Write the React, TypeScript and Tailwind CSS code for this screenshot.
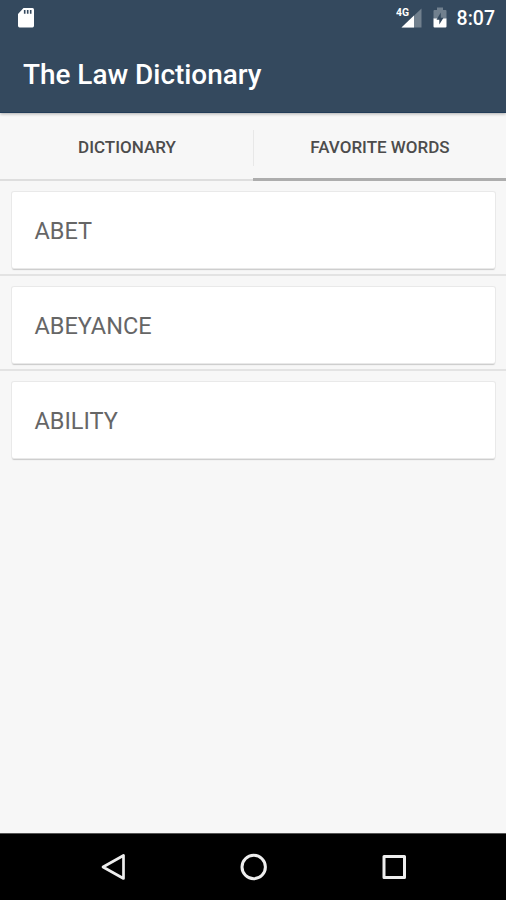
const words = ["ABET", "ABEYANCE", "ABILITY"];

function SdCardIcon() {
    return <svg width="18" height="22" viewBox="0 0 18 22">
        <path d="M6.5 1H15.5Q17 1 17 2.500V18.500Q17 20.500 15.500 20.500H2.500Q1 20.500 1 18.500V7Z" fill="#fff" />
        <path d="M7.700 3V6.800M10.700 3V6.800M13.700 3V6.800" stroke="#34495e" strokeWidth="1.600" />
    </svg>
}

function SignalIcon() {
    return <svg width="28" height="24" viewBox="0 0 28 24">
        <path d="M25.500 2.500V21.500H5.500Z" fill="#71808e" />
        <path d="M18 9.600V21.500H5.500Z" fill="#fff" />
        <text x="0" y="9.500" fontSize="10" fontWeight="700" fill="#fff" textLength="13" lengthAdjust="spacingAndGlyphs">4G</text>
    </svg>
}

function BatteryIcon() {
    return <svg width="14" height="22" viewBox="0 0 14 22">
        <path d="M4 0.500H10V3H12.500Q13.500 3 13.500 4V12H0.500V4Q0.500 3 1.500 3H4Z" fill="#71808e" />
        <path d="M0.500 11.500H13.500V19.500Q13.500 20.500 12.500 20.500H1.500Q0.500 20.500 0.500 19.500Z" fill="#fff" />
        <path d="M7.800 5.500L3.500 12.800H6.300V17.500L10.500 10.800H7.800Z" fill="#34495e" />
    </svg>
}

function Header() {
    return <div className="h-[113px] shrink-0 bg-[#34495e] border-b border-[#223c58] text-white relative shadow-[0_1px_3px_rgba(0,0,0,0.3)]">
        <div className="h-9 flex items-center justify-between pl-[17px] pr-[11px]">
            <SdCardIcon />
            <div className="flex items-center">
                <SignalIcon />
                <div className="ml-[9px] mr-[10px]">
                    <BatteryIcon />
                </div>
                <span className="text-[19.5px] leading-none font-medium pt-0.5">8:07</span>
            </div>
        </div>
        <div className="h-[76px] flex items-center pl-[23px] pt-px">
            <h1 className="text-[27.9px] leading-none font-medium whitespace-nowrap">The Law Dictionary</h1>
        </div>
    </div>
}

function Tabs() {
    return <div className="h-[68px] shrink-0 flex text-[17px] font-medium text-[#4c4c4c]">
        <div className="w-[253px] flex items-center justify-center pt-[3px] pl-px border-b-2 border-[#dedede]">DICTIONARY</div>
        <div className="flex-1 flex border-b-[3px] border-[#adadad]">
            <div className="w-px h-9 mt-[17px] bg-[#e8e8e8]"></div>
            <div className="flex-1 flex items-center justify-center pt-1">FAVORITE WORDS</div>
        </div>
    </div>
}

function WordRow({ word, last }: { word: string, last: boolean }) {
    return <div className="h-[95px] pt-[11px]">
        <div className="ml-[12px] mr-[11px] h-[76px] pl-[22.5px] pt-1 flex items-center bg-white rounded-[2px] text-[23.5px] text-[#666] shadow-[0_0_0_1px_#e9e9e9,0_2px_1px_#c9c9c9]">
            {word}
        </div>
        {!last && <div className="mt-[6px] h-[2px] bg-[#e3e3e3]"></div>}
    </div>
}

function NavBar() {
    return <div className="h-[67px] shrink-0 bg-black border-t border-[#555] flex items-center pl-[100px]">
        <svg width="28" height="30" viewBox="0 0 28 30" fill="none" stroke="#eee" strokeWidth="2.700" strokeLinejoin="round">
            <path d="M3 15L23.500 3.500V26.500Z" />
        </svg>
        <svg className="ml-[111.5px]" width="28" height="28" viewBox="0 0 28 28" fill="none" stroke="#eee" strokeWidth="3">
            <circle cx="13.700" cy="14" r="11.700" />
        </svg>
        <svg className="ml-[114px]" width="26" height="26" viewBox="0 0 26 26" fill="none" stroke="#eee" strokeWidth="3" strokeLinejoin="round">
            <path d="M2 2.500H22.500V23.500H2Z" />
        </svg>
    </div>
}

export default function App() {
    return <div className="w-full h-[900px] flex flex-col bg-[#f7f7f7] font-['Roboto',sans-serif] overflow-hidden">
        <Header />
        <Tabs />
        <div className="flex-1">
            {words.map((word, i) => <WordRow key={word} word={word} last={i === words.length - 1} />)}
        </div>
        <NavBar />
    </div>
}
